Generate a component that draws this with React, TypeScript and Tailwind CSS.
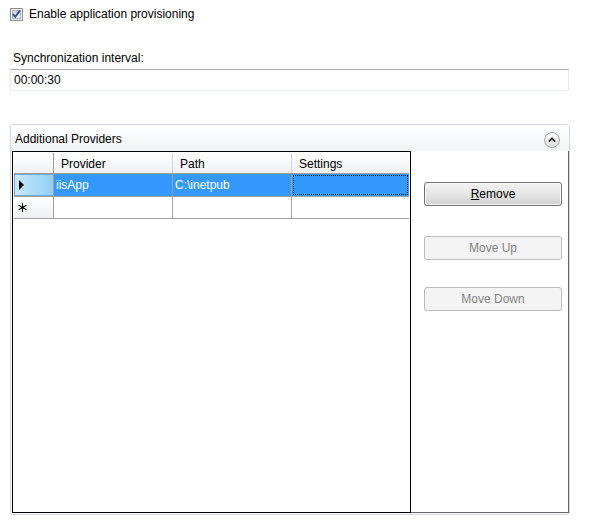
import React from "react";

const font = "font-['Liberation_Sans','Arial',sans-serif]";

const CheckBox = () => (
  <svg width="13" height="13" viewBox="0 0 13 13" className="shrink-0">
    <defs>
      <linearGradient id="cbFill" x1="0" y1="0" x2="1" y2="1">
        <stop offset="0" stopColor="#cbcfd5" />
        <stop offset="1" stopColor="#f6f6f6" />
      </linearGradient>
    </defs>
    <rect x="0.5" y="0.5" width="12" height="12" fill="#f4f4f4" stroke="#8e8f8f" />
    <rect x="2.5" y="2.5" width="8" height="8" fill="url(#cbFill)" stroke="#b0b4ba" />
    <path d="M3 6.2 L5.2 8.8 L10 2.6" fill="none" stroke="#324d8a" strokeWidth="1.8" />
  </svg>
);

const CollapseButton = () => (
  <svg width="18" height="18" viewBox="0 0 18 18">
    <defs>
      <linearGradient id="cbtn" x1="0" y1="0" x2="0" y2="1">
        <stop offset="0" stopColor="#ffffff" />
        <stop offset="1" stopColor="#dcdcdc" />
      </linearGradient>
    </defs>
    <circle cx="9" cy="9" r="7.5" fill="url(#cbtn)" stroke="#a6a6a6" />
    <path d="M5.8 10.6 L9 7.4 L12.2 10.6" fill="none" stroke="#222" strokeWidth="1.8" />
  </svg>
);

const HeaderCell = ({ label, w }: { label?: string; w: string }) => (
  <div
    className={`${w} h-full flex items-center pl-[7px] pt-px border-r border-[#d5d5d5] bg-gradient-to-b from-[#ffffff] to-[#eef0f3]`}
  >
    {label}
  </div>
);

const WinButton = ({ children, disabled, className = "" }: { children: React.ReactNode; disabled?: boolean; className?: string }) =>
  disabled ? (
    <div className={`h-[24px] w-[138px] flex items-center justify-center rounded-[3px] border border-[#b9bcbf] bg-[#f4f4f4] text-[#838383] ${className}`}>
      {children}
    </div>
  ) : (
    <div className={`h-[24px] w-[138px] flex items-center justify-center rounded-[3px] border border-[#707070] bg-gradient-to-b from-[#f2f2f2] via-[#e6e6e6] to-[#d0d0d0] text-black shadow-[inset_0_0_0_1px_#fbfbfb] ${className}`}>
      {children}
    </div>
  );

export default function App() {
  return (
    <div className={`w-[590px] h-[524px] bg-white text-[12px] text-black ${font}`}>
      <div className="pt-[8px] pl-[10px] flex items-center gap-[6px] h-[21px]">
        <CheckBox />
        <span className="leading-[13px]">Enable application provisioning</span>
      </div>

      <div className="mt-[30px] pl-[13px] leading-[15px]">Synchronization interval:</div>

      <div className="mt-[3px] ml-[10px] w-[559px] h-[22px] flex items-center pl-[3px] border border-[#e3e9ef] border-t-[#abadb3]">
        00:00:30
      </div>

      <div className="mt-[33px] ml-[10px] w-[560px] h-[391px] flex flex-col rounded-[3px] border border-[#d0d9e1]">
        <div className="h-[26px] shrink-0 flex items-center justify-between pl-[4px] pr-[8px] bg-gradient-to-b from-[#ffffff] to-[#f1f3f5]">
          <span className="pt-[2px]">Additional Providers</span>
          <div className="pt-[4px]">
            <CollapseButton />
          </div>
        </div>

        <div className="flex-1 flex pl-[1px] pb-[1px]">
          <div className="w-[399px] h-full border border-black p-px bg-white">
            <div className="flex h-[21px] border-b border-[#a0a0a0]">
              <div className="w-[40px] h-full border-r border-[#a0a0a0] bg-gradient-to-b from-[#ffffff] to-[#eef0f3]" />
              <HeaderCell label="Provider" w="w-[119px]" />
              <HeaderCell label="Path" w="w-[119px]" />
              <div className="flex-1 h-full flex items-center pl-[7px] pt-px bg-gradient-to-b from-[#ffffff] to-[#eef0f3]">
                Settings
              </div>
            </div>

            <div className="flex h-[23px] border-b border-[#a0a0a0]">
              <div className="w-[40px] h-full border-r border-[#a0a0a0] bg-gradient-to-r from-[#c9e8fb] to-[#8fd0f6] shadow-[inset_1px_1px_0_#6aa7d3,inset_0_-1px_0_#6aa7d3] flex items-center pl-[5px]">
                <svg width="6" height="10" viewBox="0 0 6 10">
                  <path d="M0 0 L5 5 L0 10 Z" fill="#000" />
                </svg>
              </div>
              <div className="w-[119px] h-full flex items-center pl-[2px] bg-[#3399ff] text-white border-r border-[#a0a0a0]">
                iisApp
              </div>
              <div className="w-[119px] h-full flex items-center pl-[2px] bg-[#3399ff] text-white border-r border-[#a0a0a0]">
                C:\inetpub
              </div>
              <div className="flex-1 h-full bg-[#3399ff] p-px">
                <div className="h-full border border-dotted border-[#1a1a1a]" />
              </div>
            </div>

            <div className="flex h-[22px] border-b border-[#a0a0a0]">
              <div className="w-[40px] h-full border-r border-[#a0a0a0] bg-gradient-to-b from-[#ffffff] to-[#eef0f3] flex items-center pl-[4px]">
                <svg width="9" height="9" viewBox="0 0 9 9">
                  <path d="M4.5 0 V9 M0.6 2.25 L8.4 6.75 M0.6 6.75 L8.4 2.25" stroke="#000" strokeWidth="1.1" fill="none" />
                </svg>
              </div>
              <div className="w-[119px] h-full border-r border-[#a0a0a0]" />
              <div className="w-[119px] h-full border-r border-[#a0a0a0]" />
              <div className="flex-1 h-full" />
            </div>
          </div>

          <div className="w-[158px] h-full border-r border-b border-[#646464] flex flex-col items-start pl-[13px] pt-[31px]">
            <WinButton>
              <span>
                <span className="underline">R</span>emove
              </span>
            </WinButton>
            <WinButton disabled className="mt-[30px]">Move Up</WinButton>
            <WinButton disabled className="mt-[27px]">Move Down</WinButton>
          </div>
        </div>
      </div>
    </div>
  );
}
